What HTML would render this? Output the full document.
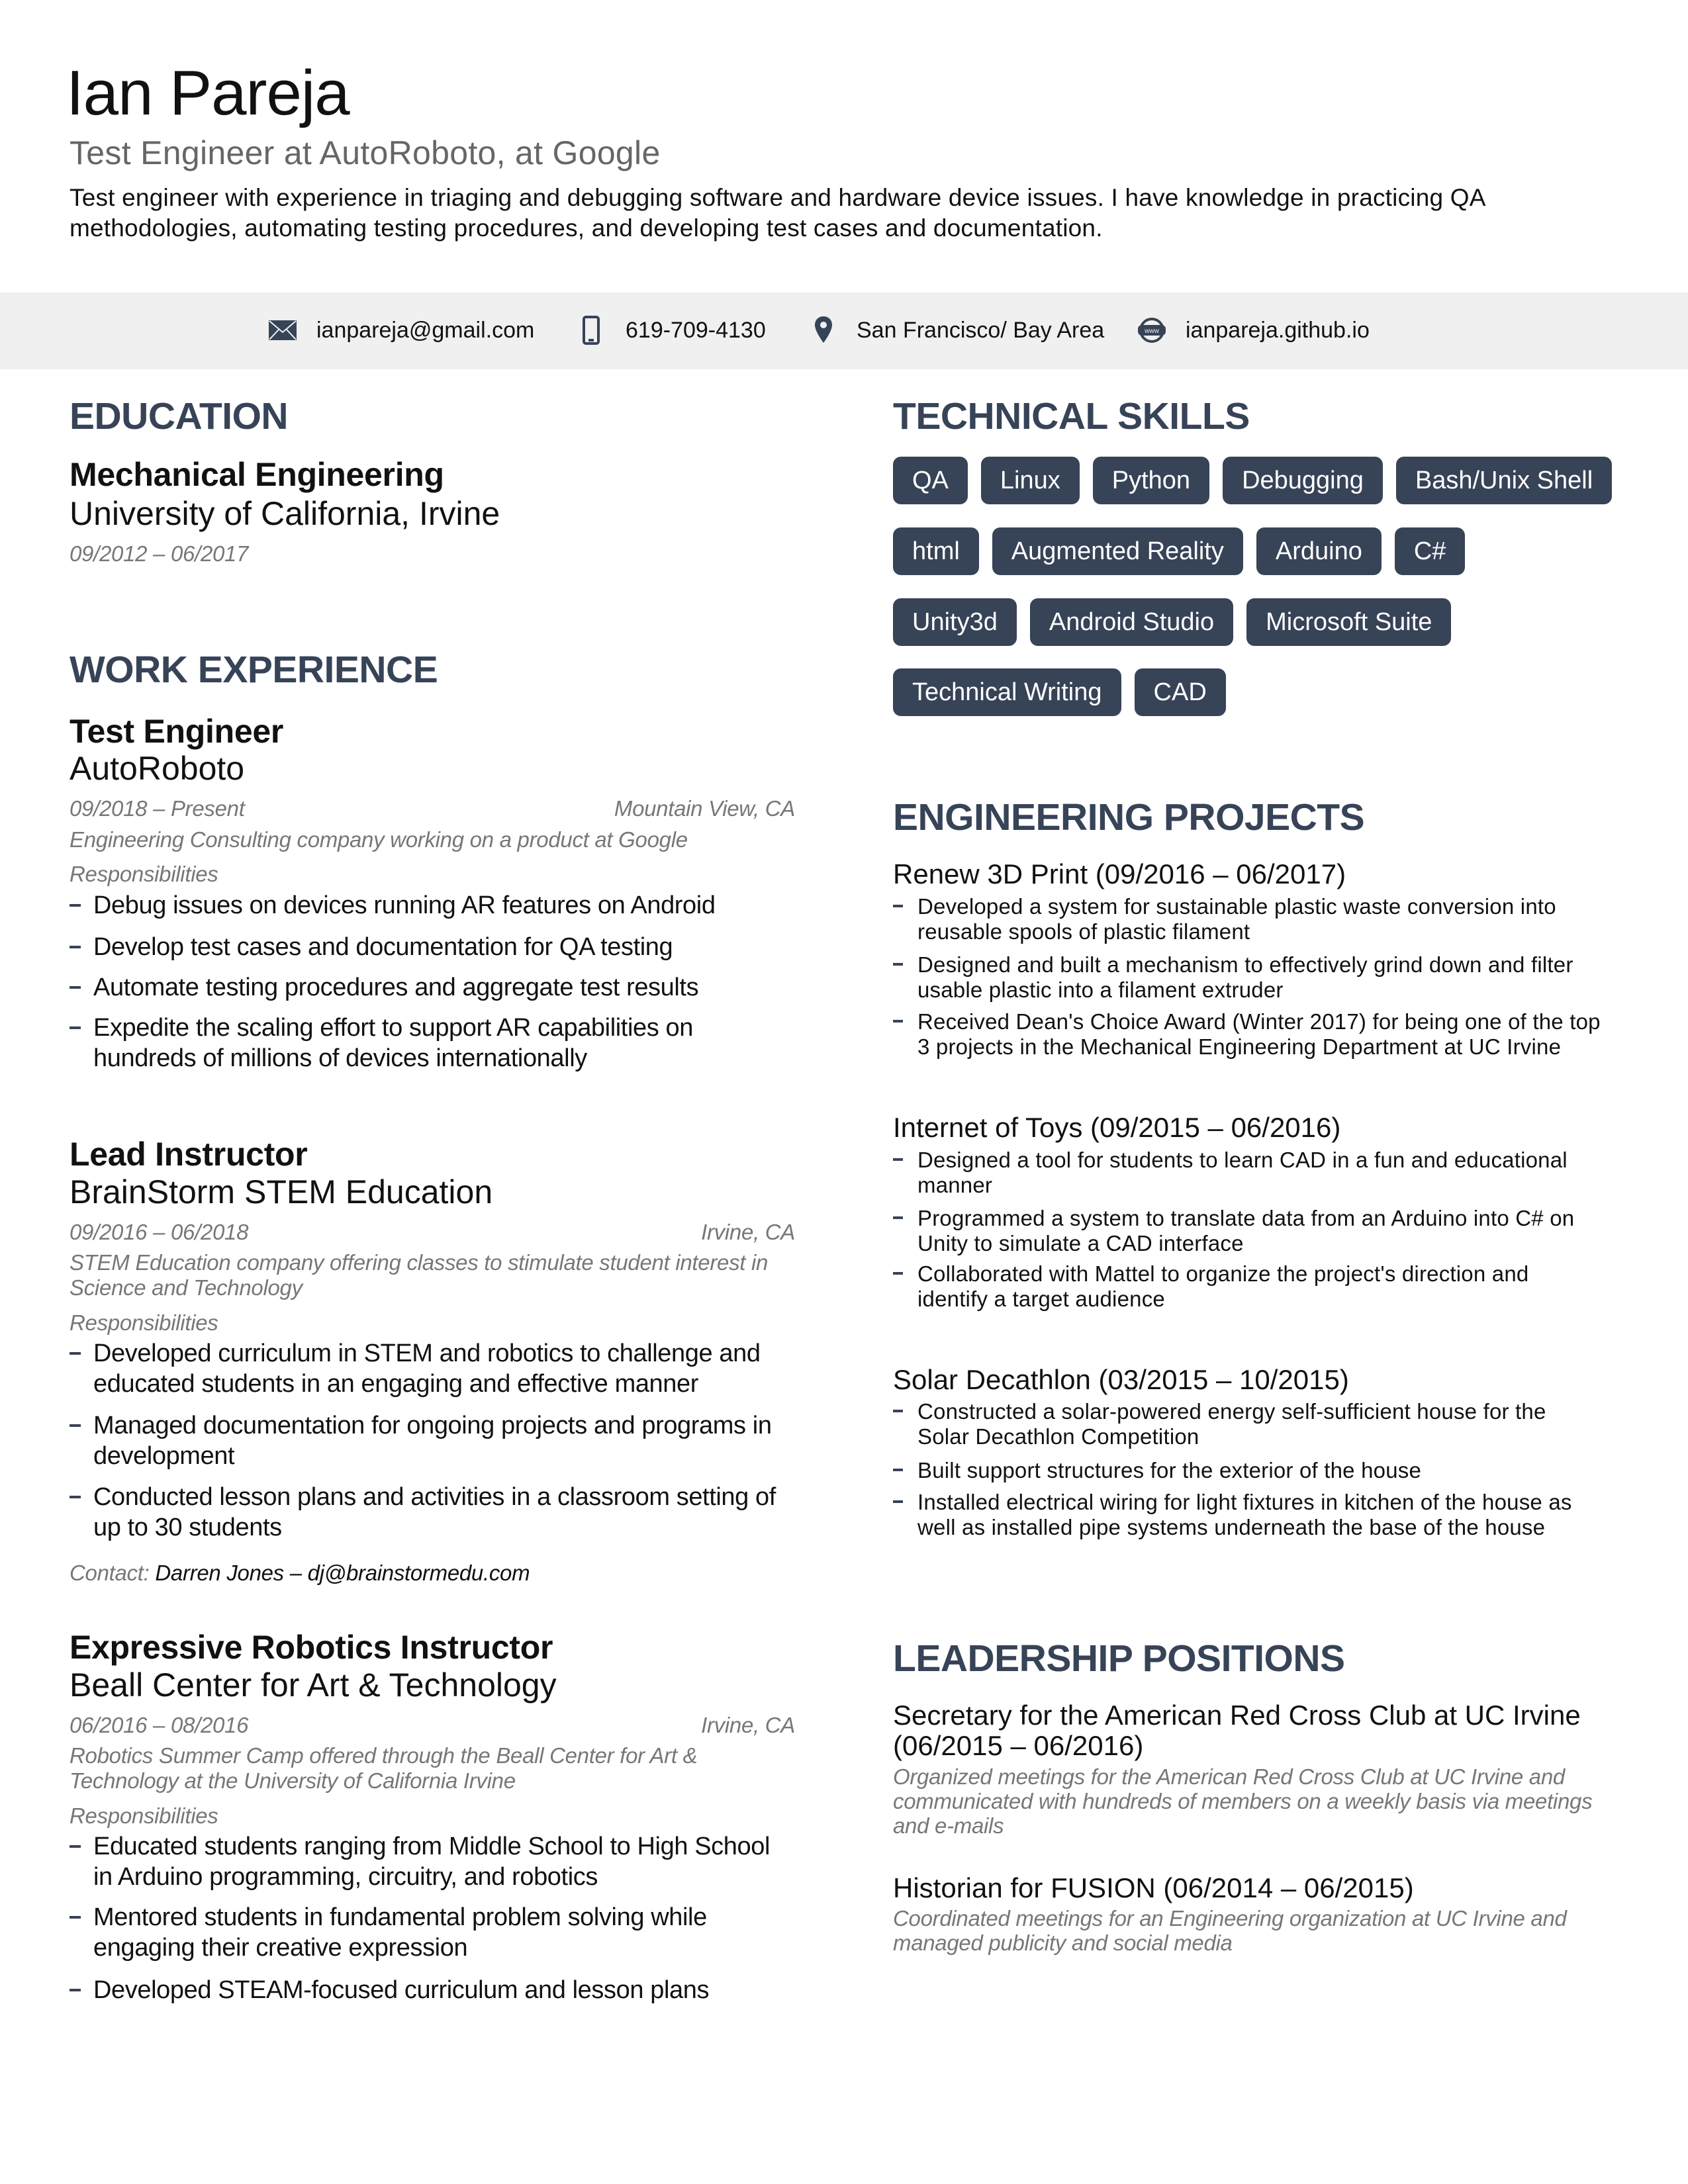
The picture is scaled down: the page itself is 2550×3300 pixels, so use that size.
<!DOCTYPE html>
<html><head><meta charset="utf-8"><style>
*{margin:0;padding:0;box-sizing:border-box}
body{width:2550px;height:3300px;position:relative;background:#fff;font-family:"Liberation Sans",sans-serif;color:#111;overflow:hidden}
.a{position:absolute;white-space:nowrap}
.h{font-size:57px;font-weight:bold;color:#374357;line-height:60px;letter-spacing:-0.5px}
.t{font-size:50px;font-weight:bold;line-height:56px;letter-spacing:-0.3px}
.s{font-size:50px;line-height:56px;letter-spacing:0}
.d{font-size:33px;font-style:italic;color:#777;line-height:38px;letter-spacing:-0.3px}
.b{font-size:38px;line-height:46px;padding-left:36px;letter-spacing:-0.4px}
.b:before,.rb:before{content:"";position:absolute;left:0;top:21px;width:17px;height:4px;background:#374357}
.rb{font-size:33px;line-height:38px;padding-left:37px;letter-spacing:0.2px}
.rb:before{top:16px;width:15px}
.pt{font-size:42px;line-height:46px;letter-spacing:0}
.bar{position:absolute;left:0;top:442px;width:2550px;height:116px;background:#f0f0f0}
.c{font-size:34px;line-height:40px;top:479px}
.row{position:absolute;left:1349px;display:flex;column-gap:20px}
.tag{background:#374357;color:#fff;font-size:38px;height:72px;line-height:72px;padding:0 29px;border-radius:12px;letter-spacing:0}
</style></head><body>
<div class="a" style="left:100px;top:91px;font-size:96px;line-height:100px;letter-spacing:-1px">Ian Pareja</div>
<div class="a" style="left:105px;top:203px;font-size:50px;line-height:56px;color:#666;letter-spacing:0.3px">Test Engineer at AutoRoboto, at Google</div>
<div class="a" style="left:105px;top:276px;font-size:37px;line-height:46px;letter-spacing:0.2px">Test engineer with experience in triaging and debugging software and hardware device issues. I have knowledge in practicing QA<br>methodologies, automating testing procedures, and developing test cases and documentation.</div>

<div class="bar"></div>
<svg class="a" style="left:406px;top:484px" width="42" height="30" viewBox="0 0 42 30"><rect width="42" height="30" fill="#374357"/><path d="M1 1 L21 18 L41 1 M1 29 L15 14 M41 29 L27 14" stroke="#f0f0f0" stroke-width="2" fill="none"/></svg>
<div class="a c" style="left:478px">ianpareja@gmail.com</div>
<svg class="a" style="left:880px;top:477px" width="26" height="44" viewBox="0 0 26 44"><rect x="2" y="2" width="22" height="40" rx="3" fill="none" stroke="#374357" stroke-width="4"/><rect x="9" y="35" width="8" height="4" fill="#374357"/></svg>
<div class="a c" style="left:945px">619-709-4130</div>
<svg class="a" style="left:1229px;top:476px" width="30" height="44" viewBox="0 0 30 44"><path d="M15 2C7 2 2 8 2 15C2 25 15 42 15 42S28 25 28 15C28 8 23 2 15 2Z" fill="#374357"/><circle cx="15" cy="15" r="5" fill="#f0f0f0"/></svg>
<div class="a c" style="left:1294px">San Francisco/ Bay Area</div>
<svg class="a" style="left:1718px;top:479px" width="44" height="40" viewBox="0 0 44 40"><circle cx="22" cy="20" r="17" fill="none" stroke="#374357" stroke-width="4"/><rect x="1" y="12" width="42" height="16" rx="6" fill="#374357"/><text x="22" y="24" font-size="10" fill="#f0f0f0" text-anchor="middle" font-family="Liberation Sans">www</text></svg>
<div class="a c" style="left:1791px">ianpareja.github.io</div>

<!-- LEFT -->
<div class="a h" style="left:105px;top:599px">EDUCATION</div>
<div class="a t" style="left:105px;top:689px">Mechanical Engineering</div>
<div class="a s" style="left:105px;top:748px">University of California, Irvine</div>
<div class="a d" style="left:105px;top:818px">09/2012 – 06/2017</div>

<div class="a h" style="left:105px;top:982px">WORK EXPERIENCE</div>
<div class="a t" style="left:105px;top:1077px">Test Engineer</div>
<div class="a s" style="left:105px;top:1133px">AutoRoboto</div>
<div class="a d" style="left:105px;top:1203px">09/2018 – Present</div>
<div class="a d" style="right:1349px;top:1203px">Mountain View, CA</div>
<div class="a d" style="left:105px;top:1250px">Engineering Consulting company working on a product at Google</div>
<div class="a d" style="left:105px;top:1302px">Responsibilities</div>
<div class="a b" style="left:105px;top:1345px">Debug issues on devices running AR features on Android</div>
<div class="a b" style="left:105px;top:1408px">Develop test cases and documentation for QA testing</div>
<div class="a b" style="left:105px;top:1469px">Automate testing procedures and aggregate test results</div>
<div class="a b" style="left:105px;top:1530px">Expedite the scaling effort to support AR capabilities on<br>hundreds of millions of devices internationally</div>

<div class="a t" style="left:105px;top:1716px">Lead Instructor</div>
<div class="a s" style="left:105px;top:1773px">BrainStorm STEM Education</div>
<div class="a d" style="left:105px;top:1843px">09/2016 – 06/2018</div>
<div class="a d" style="right:1349px;top:1843px">Irvine, CA</div>
<div class="a d" style="left:105px;top:1889px">STEM Education company offering classes to stimulate student interest in<br>Science and Technology</div>
<div class="a d" style="left:105px;top:1980px">Responsibilities</div>
<div class="a b" style="left:105px;top:2022px">Developed curriculum in STEM and robotics to challenge and<br>educated students in an engaging and effective manner</div>
<div class="a b" style="left:105px;top:2131px">Managed documentation for ongoing projects and programs in<br>development</div>
<div class="a b" style="left:105px;top:2239px">Conducted lesson plans and activities in a classroom setting of<br>up to 30 students</div>
<div class="a d" style="left:105px;top:2358px">Contact: <span style="color:#111">Darren Jones – dj@brainstormedu.com</span></div>

<div class="a t" style="left:105px;top:2461px">Expressive Robotics Instructor</div>
<div class="a s" style="left:105px;top:2518px">Beall Center for Art &amp; Technology</div>
<div class="a d" style="left:105px;top:2588px">06/2016 – 08/2016</div>
<div class="a d" style="right:1349px;top:2588px">Irvine, CA</div>
<div class="a d" style="left:105px;top:2634px">Robotics Summer Camp offered through the Beall Center for Art &amp;<br>Technology at the University of California Irvine</div>
<div class="a d" style="left:105px;top:2725px">Responsibilities</div>
<div class="a b" style="left:105px;top:2767px">Educated students ranging from Middle School to High School<br>in Arduino programming, circuitry, and robotics</div>
<div class="a b" style="left:105px;top:2874px">Mentored students in fundamental problem solving while<br>engaging their creative expression</div>
<div class="a b" style="left:105px;top:2984px">Developed STEAM-focused curriculum and lesson plans</div>

<!-- RIGHT -->
<div class="a h" style="left:1349px;top:599px">TECHNICAL SKILLS</div>
<div class="row" style="top:690px"><div class="tag">QA</div><div class="tag">Linux</div><div class="tag">Python</div><div class="tag">Debugging</div><div class="tag">Bash/Unix Shell</div></div>
<div class="row" style="top:797px"><div class="tag">html</div><div class="tag">Augmented Reality</div><div class="tag">Arduino</div><div class="tag">C#</div></div>
<div class="row" style="top:904px"><div class="tag">Unity3d</div><div class="tag">Android Studio</div><div class="tag">Microsoft Suite</div></div>
<div class="row" style="top:1010px"><div class="tag">Technical Writing</div><div class="tag">CAD</div></div>

<div class="a h" style="left:1349px;top:1205px">ENGINEERING PROJECTS</div>
<div class="a pt" style="left:1349px;top:1298px">Renew 3D Print (09/2016 – 06/2017)</div>
<div class="a rb" style="left:1349px;top:1351px">Developed a system for sustainable plastic waste conversion into<br>reusable spools of plastic filament</div>
<div class="a rb" style="left:1349px;top:1439px">Designed and built a mechanism to effectively grind down and filter<br>usable plastic into a filament extruder</div>
<div class="a rb" style="left:1349px;top:1525px">Received Dean's Choice Award (Winter 2017) for being one of the top<br>3 projects in the Mechanical Engineering Department at UC Irvine</div>

<div class="a pt" style="left:1349px;top:1681px">Internet of Toys (09/2015 – 06/2016)</div>
<div class="a rb" style="left:1349px;top:1734px">Designed a tool for students to learn CAD in a fun and educational<br>manner</div>
<div class="a rb" style="left:1349px;top:1822px">Programmed a system to translate data from an Arduino into C# on<br>Unity to simulate a CAD interface</div>
<div class="a rb" style="left:1349px;top:1906px">Collaborated with Mattel to organize the project's direction and<br>identify a target audience</div>

<div class="a pt" style="left:1349px;top:2062px">Solar Decathlon (03/2015 – 10/2015)</div>
<div class="a rb" style="left:1349px;top:2114px">Constructed a solar-powered energy self-sufficient house for the<br>Solar Decathlon Competition</div>
<div class="a rb" style="left:1349px;top:2203px">Built support structures for the exterior of the house</div>
<div class="a rb" style="left:1349px;top:2251px">Installed electrical wiring for light fixtures in kitchen of the house as<br>well as installed pipe systems underneath the base of the house</div>

<div class="a h" style="left:1349px;top:2476px">LEADERSHIP POSITIONS</div>
<div class="a pt" style="left:1349px;top:2569px">Secretary for the American Red Cross Club at UC Irvine<br>(06/2015 – 06/2016)</div>
<div class="a d" style="left:1349px;top:2666px;line-height:37px">Organized meetings for the American Red Cross Club at UC Irvine and<br>communicated with hundreds of members on a weekly basis via meetings<br>and e-mails</div>
<div class="a pt" style="left:1349px;top:2830px">Historian for FUSION (06/2014 – 06/2015)</div>
<div class="a d" style="left:1349px;top:2880px;line-height:37px">Coordinated meetings for an Engineering organization at UC Irvine and<br>managed publicity and social media</div>
</body></html>
